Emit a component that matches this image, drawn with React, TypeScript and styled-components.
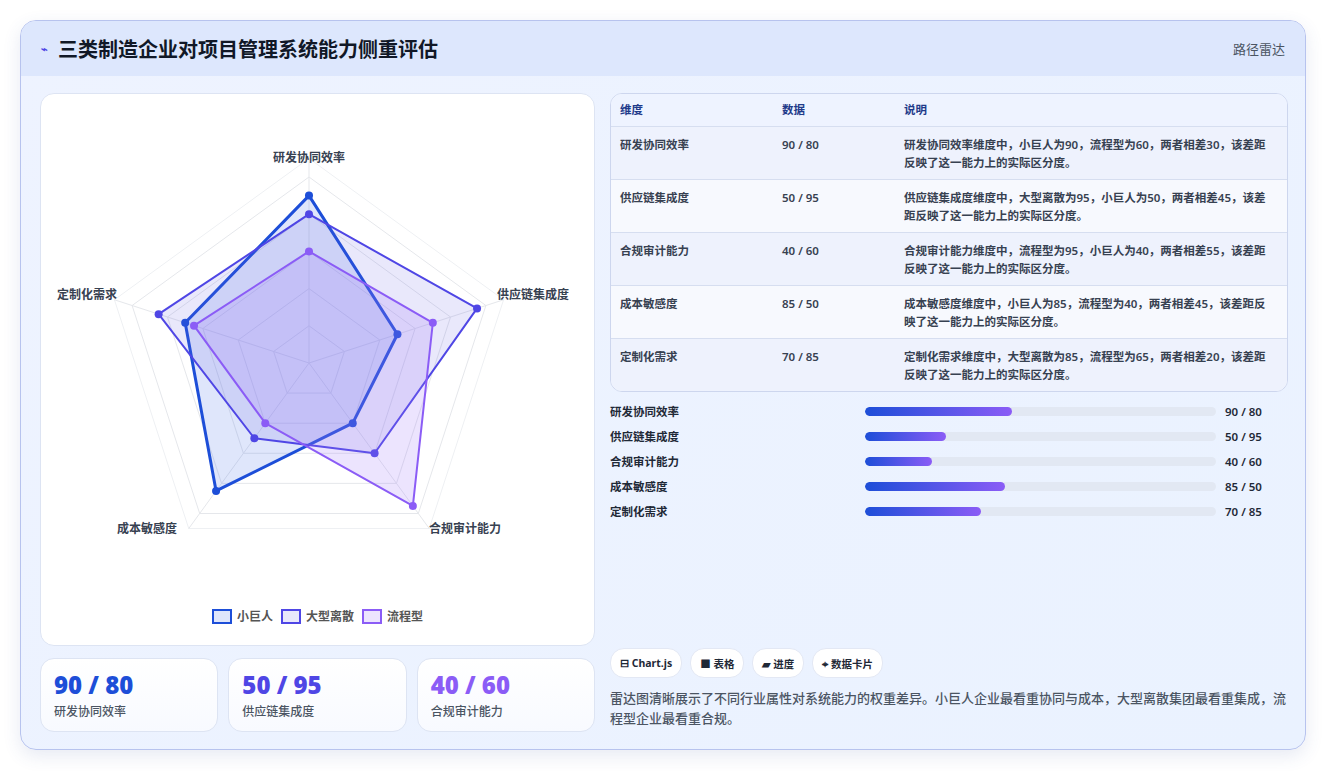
import React from "react";
import styled, { createGlobalStyle } from "styled-components";

const G = createGlobalStyle`
  body{margin:0;background:#fff;font-family:"Noto Sans","Noto Sans CJK SC",sans-serif;}
`;
const Page = styled.div`padding:20px 21px 21px 20px;`;
const Frame = styled.div`
  height:730px;box-sizing:border-box;border:1px solid #b7c3ee;border-radius:16px;overflow:hidden;
  background:linear-gradient(135deg,#eef3ff,#eaf2ff);box-shadow:0 6px 18px rgba(60,80,160,.12);
  display:flex;flex-direction:column;
`;
const Header = styled.div`
  height:55px;flex:none;background:#dde7fd;display:flex;align-items:center;justify-content:space-between;padding:0 20px 0 20px;
`;
const Title = styled.div`font-size:20px;font-weight:700;color:#111827;display:flex;align-items:center;gap:10px;`;
const Tag = styled.div`font-size:13px;color:#4b5563;`;
const Body = styled.div`flex:1;display:grid;grid-template-columns:555px 678px;gap:15px;padding:17px 19px 18px 19px;`;
const Col = styled.div`display:flex;flex-direction:column;min-height:0;`;
const ChartCard = styled.div`
  height:553px;box-sizing:border-box;background:#fff;border:1px solid #dde4f3;border-radius:14px;position:relative;
`;
const Legend = styled.div`position:absolute;left:0;right:0;bottom:20px;display:flex;justify-content:center;gap:8px;font-size:12px;font-weight:600;color:#555;`;
const LItem = styled.div`display:flex;align-items:center;gap:5px;`;
const Swatch = styled.span<{ c: string; f: string }>`width:16px;height:11px;border:2px solid ${p => p.c};background:${p => p.f};`;
const Stats = styled.div`display:grid;grid-template-columns:repeat(3,1fr);gap:10px;margin-top:12px;`;
const Stat = styled.div`height:74px;box-sizing:border-box;background:linear-gradient(#fff,#f8faff);border:1px solid #dde4f3;border-radius:14px;padding:9px 13px;`;
const StatV = styled.div<{ c: string }>`font-size:24px;font-weight:800;color:${p => p.c};line-height:34px;font-family:"Open Sans","Noto Sans",sans-serif;`;
const StatL = styled.div`font-size:12px;color:#4b5563;font-weight:500;`;
const Table = styled.div`border:1px solid #cdd6ee;border-radius:12px;overflow:hidden;background:#f7f9fe;`;
const Row = styled.div<{ h?: boolean; alt?: boolean }>`
  display:grid;grid-template-columns:162px 122px 1fr;padding:0 16px 0 9px;
  ${p => p.h ? "height:32px;align-items:center;background:#eef3ff;color:#1e3a8a;font-weight:600;" : "height:53px;padding-top:9px;box-sizing:border-box;"}
  ${p => !p.h ? `background:${p.alt ? "#f7f9fe" : "#eef2fd"};color:#374151;font-weight:600;` : ""}
  border-top:${p => p.h ? "none" : "1px solid #d6def0"};
  font-size:11.5px;line-height:18px;
`;
const Bars = styled.div`display:flex;flex-direction:column;gap:7px;margin-top:10px;`;
const BarRow = styled.div`display:grid;grid-template-columns:255px 351px 1fr;align-items:center;height:18px;font-size:11.5px;font-weight:600;color:#1f2937;`;
const Track = styled.div`height:9px;background:#e2e8f3;border-radius:5px;overflow:hidden;`;
const Fill = styled.div`height:100%;border-radius:5px;background:linear-gradient(90deg,#1d4ed8,#8b5cf6);`;
const BarVal = styled.div`padding-left:9px;`;
const Chips = styled.div`display:flex;gap:8px;margin-top:auto;`;
const Chip = styled.div`height:28px;padding:0 9px;border-radius:14px;background:#fff;border:1px solid #e3e8f4;display:flex;align-items:center;font-size:10.5px;font-weight:700;color:#1f2937;`;
const Desc = styled.p`margin:10px 0 4px;font-size:13px;line-height:20px;color:#4b5563;font-weight:500;`;

const dims = ["研发协同效率", "供应链集成度", "合规审计能力", "成本敏感度", "定制化需求"];
const series = [
  { c: "#1d4ed8", f: "rgba(59,100,230,.16)", v: [90, 50, 40, 85, 70], w: 3 },
  { c: "#4f46e5", f: "rgba(99,90,230,.14)", v: [80, 95, 60, 50, 85], w: 2 },
  { c: "#8b5cf6", f: "rgba(160,120,250,.2)", v: [60, 70, 95, 40, 65], w: 2 },
];
const cx = 268, cy = 269, R = 186;
const pt = (i: number, r: number) => {
  const a = (i * 72 * Math.PI) / 180;
  return [cx + Math.sin(a) * r, cy - Math.cos(a) * r];
};
const labels: [number, number, string][] = [
  [268, 68, "middle"], [456, 205, "start"], [424, 439, "middle"], [106, 439, "middle"], [16, 205, "start"],
];

function Radar() {
  return (
    <svg width="553" height="500" style={{ position: "absolute", left: 0, top: 0 }}>
      {[20, 40, 60, 80, 100, 110].map(k => (
        <polygon key={k} fill="none" stroke={k === 110 ? "#eef0f3" : "#e5e7eb"} strokeWidth="1"
          points={[0, 1, 2, 3, 4].map(i => pt(i, (R * k) / 100).join(",")).join(" ")} />
      ))}
      {[0, 1, 2, 3, 4].map(i => { const [x, y] = pt(i, R * 1.1); return <line key={i} x1={cx} y1={cy} x2={x} y2={y} stroke="#e5e7eb" />; })}
      {series.map((s, si) => (
        <g key={si}>
          <polygon points={s.v.map((v, i) => pt(i, (R * v) / 100).join(",")).join(" ")} fill={s.f} stroke={s.c} strokeWidth={s.w} strokeLinejoin="round" />
          {s.v.map((v, i) => { const [x, y] = pt(i, (R * v) / 100); return <circle key={i} cx={x} cy={y} r="4" fill={s.c} />; })}
        </g>
      ))}
      {labels.map(([x, y, a], i) => (
        <text key={i} x={x} y={y} textAnchor={a as any} fontSize="12" fontWeight="700" fill="#374151" fontFamily="Noto Sans CJK SC">{dims[i]}</text>
      ))}
    </svg>
  );
}

const rows = [
  ["研发协同效率", "90 / 80", "研发协同效率维度中，小巨人为90，流程型为60，两者相差30，该差距反映了这一能力上的实际区分度。"],
  ["供应链集成度", "50 / 95", "供应链集成度维度中，大型离散为95，小巨人为50，两者相差45，该差距反映了这一能力上的实际区分度。"],
  ["合规审计能力", "40 / 60", "合规审计能力维度中，流程型为95，小巨人为40，两者相差55，该差距反映了这一能力上的实际区分度。"],
  ["成本敏感度", "85 / 50", "成本敏感度维度中，小巨人为85，流程型为40，两者相差45，该差距反映了这一能力上的实际区分度。"],
  ["定制化需求", "70 / 85", "定制化需求维度中，大型离散为85，流程型为65，两者相差20，该差距反映了这一能力上的实际区分度。"],
];
const fills = [42, 23, 19, 40, 33];

export default function App() {
  return (
    <Page>
      <G />
      <Frame>
        <Header>
          <Title><span style={{ fontSize: 11, color: "#4f46e5" }}>⌁</span>三类制造企业对项目管理系统能力侧重评估</Title>
          <Tag>路径雷达</Tag>
        </Header>
        <Body>
          <Col>
            <ChartCard>
              <Radar />
              <Legend>
                {["小巨人", "大型离散", "流程型"].map((n, i) => (
                  <LItem key={n}><Swatch c={series[i].c} f={series[i].f} />{n}</LItem>
                ))}
              </Legend>
            </ChartCard>
            <Stats>
              <Stat><StatV c="#1d4ed8">90 / 80</StatV><StatL>研发协同效率</StatL></Stat>
              <Stat><StatV c="#4f46e5">50 / 95</StatV><StatL>供应链集成度</StatL></Stat>
              <Stat><StatV c="#8b5cf6">40 / 60</StatV><StatL>合规审计能力</StatL></Stat>
            </Stats>
          </Col>
          <Col>
            <Table>
              <Row h><div>维度</div><div>数据</div><div>说明</div></Row>
              {rows.map((r, i) => (
                <Row key={i} alt={i % 2 === 1}><div>{r[0]}</div><div>{r[1]}</div><div>{r[2]}</div></Row>
              ))}
            </Table>
            <Bars>
              {rows.map((r, i) => (
                <BarRow key={i}><div>{r[0]}</div><Track><Fill style={{ width: `${fills[i]}%` }} /></Track><BarVal>{r[1]}</BarVal></BarRow>
              ))}
            </Bars>
            <Chips>
              <Chip>⊟ Chart.js</Chip><Chip>■ 表格</Chip><Chip>▰ 进度</Chip><Chip>⌖ 数据卡片</Chip>
            </Chips>
            <Desc>雷达图清晰展示了不同行业属性对系统能力的权重差异。小巨人企业最看重协同与成本，大型离散集团最看重集成，流程型企业最看重合规。</Desc>
          </Col>
        </Body>
      </Frame>
    </Page>
  );
}
